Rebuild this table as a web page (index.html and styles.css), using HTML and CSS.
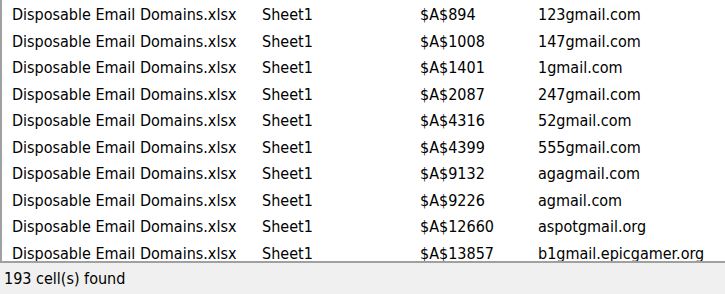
FILE: index.html
```html
<!DOCTYPE html>
<html>
<head>
<meta charset="utf-8">
<link rel="stylesheet" href="styles.css">
</head>
<body>
<div class="window">
  <div class="list">
    <div class="row"><span class="c1">Disposable Email Domains.xlsx</span><span class="c2">Sheet1</span><span class="c3">$A$894</span><span class="c4">123gmail.com</span></div>
    <div class="row"><span class="c1">Disposable Email Domains.xlsx</span><span class="c2">Sheet1</span><span class="c3">$A$1008</span><span class="c4">147gmail.com</span></div>
    <div class="row"><span class="c1">Disposable Email Domains.xlsx</span><span class="c2">Sheet1</span><span class="c3">$A$1401</span><span class="c4">1gmail.com</span></div>
    <div class="row"><span class="c1">Disposable Email Domains.xlsx</span><span class="c2">Sheet1</span><span class="c3">$A$2087</span><span class="c4">247gmail.com</span></div>
    <div class="row"><span class="c1">Disposable Email Domains.xlsx</span><span class="c2">Sheet1</span><span class="c3">$A$4316</span><span class="c4">52gmail.com</span></div>
    <div class="row"><span class="c1">Disposable Email Domains.xlsx</span><span class="c2">Sheet1</span><span class="c3">$A$4399</span><span class="c4">555gmail.com</span></div>
    <div class="row"><span class="c1">Disposable Email Domains.xlsx</span><span class="c2">Sheet1</span><span class="c3">$A$9132</span><span class="c4">agagmail.com</span></div>
    <div class="row"><span class="c1">Disposable Email Domains.xlsx</span><span class="c2">Sheet1</span><span class="c3">$A$9226</span><span class="c4">agmail.com</span></div>
    <div class="row"><span class="c1">Disposable Email Domains.xlsx</span><span class="c2">Sheet1</span><span class="c3">$A$12660</span><span class="c4">aspotgmail.org</span></div>
    <div class="row"><span class="c1">Disposable Email Domains.xlsx</span><span class="c2">Sheet1</span><span class="c3">$A$13857</span><span class="c4">b1gmail.epicgamer.org</span></div>
  </div>
  <div class="status">193 cell(s) found</div>
</div>
</body>
</html>
```
FILE: styles.css
```css
html, body {
  margin: 0;
  padding: 0;
  background: #f0f0f0;
}
.window {
  width: 725px;
  height: 294px;
  display: flex;
  flex-direction: column;
  font-family: "DejaVu Sans", Verdana, sans-serif;
  font-stretch: condensed;
  font-size: 16px;
  color: #000;
}
.list {
  height: 260px;
  padding-top: 1px;
  background: #fff;
  border-left: 2px solid #a0a0a0;
  border-bottom: 2px solid #a0a0a0;
  overflow: hidden;
  box-sizing: content-box;
}
.row {
  display: flex;
  height: 26.55px;
  line-height: 27px;
  white-space: nowrap;
}
.c1 { width: 250px; padding-left: 10px; }
.c2 { width: 158px; }
.c3 { width: 118px; }
.c4 { flex: 1; }
.status {
  flex: 1;
  display: flex;
  align-items: center;
  padding-left: 4px;
  background: #f0f0f0;
}
```
